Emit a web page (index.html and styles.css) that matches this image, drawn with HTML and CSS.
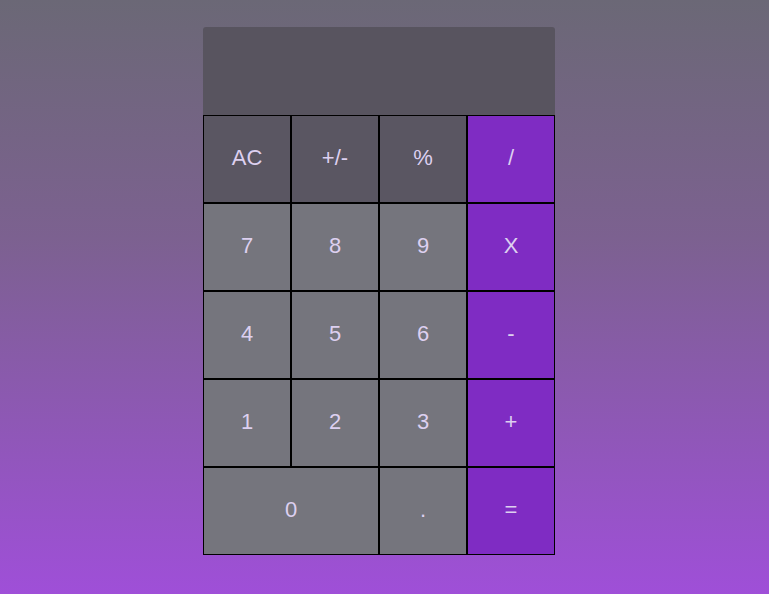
FILE: index.html
```html
<!DOCTYPE html>
<html>
<head>
<meta charset="utf-8">
<link rel="stylesheet" href="styles.css">
</head>
<body>
<div class="calc">
  <div class="display"></div>
  <div class="keys">
    <button class="key fn">AC</button>
    <button class="key fn">+/-</button>
    <button class="key fn">%</button>
    <button class="key op">/</button>
    <button class="key">7</button>
    <button class="key">8</button>
    <button class="key">9</button>
    <button class="key op">X</button>
    <button class="key">4</button>
    <button class="key">5</button>
    <button class="key">6</button>
    <button class="key op">-</button>
    <button class="key">1</button>
    <button class="key">2</button>
    <button class="key">3</button>
    <button class="key op">+</button>
    <button class="key wide">0</button>
    <button class="key">.</button>
    <button class="key op">=</button>
  </div>
</div>
</body>
</html>
```
FILE: styles.css
```css
html, body {
  margin: 0;
  height: 100%;
}
body {
  background: linear-gradient(to bottom, #6b6876 0%, #7c6190 40%, #9f4fd8 100%);
  font-family: "Liberation Sans", Arial, sans-serif;
  display: flex;
  justify-content: center;
  padding: 27px 11px 0 0;
  box-sizing: border-box;
}
.calc {
  width: 352px;
}
.display {
  height: 88px;
  background: #58545f;
  border-radius: 3px 3px 0 0;
}
.keys {
  display: grid;
  grid-template-columns: repeat(4, 88px);
  grid-auto-rows: 88px;
}
.key {
  margin: 0;
  padding: 0 0 2px;
  border: 1px solid #000;
  background: #75757d;
  color: #ddd0f0;
  font-family: "Liberation Sans", Arial, sans-serif;
  font-size: 22px;
  box-sizing: border-box;
}
.key.fn {
  background: #5a5662;
}
.key.op {
  background: #7f2cc3;
}
.key.wide {
  grid-column: span 2;
}
```
